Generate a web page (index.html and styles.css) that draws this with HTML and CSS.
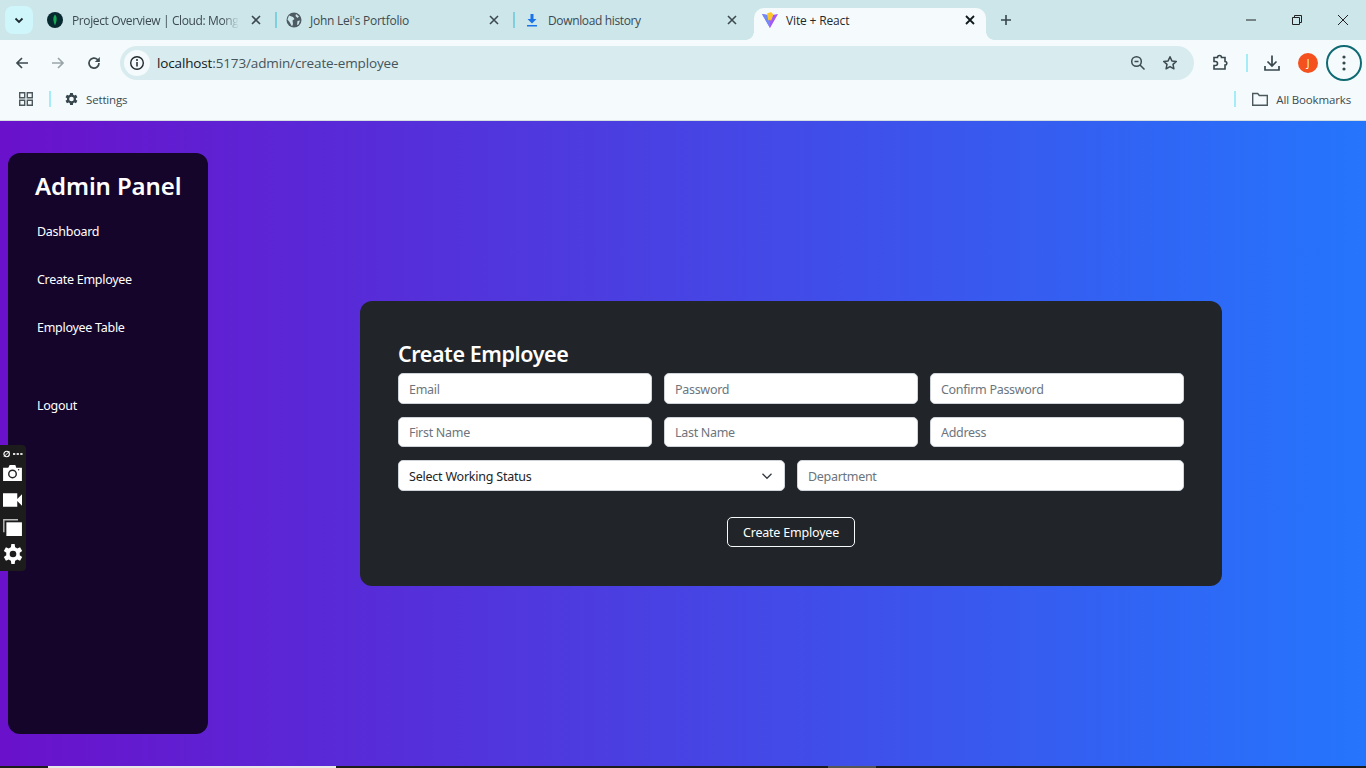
FILE: index.html
```html
<!DOCTYPE html>
<html lang="en">
<head>
<meta charset="utf-8">
<title>Vite + React</title>
<link rel="stylesheet" href="styles.css">
</head>
<body>
<div class="chrome">
  <div class="tabstrip">
    <div class="tabmenu"><svg width="12" height="12" viewBox="0 0 12 12"><path d="M2.5 4.5 6 8l3.5-3.5" fill="none" stroke="#1d2b30" stroke-width="1.8"/></svg></div>
    <div class="tab tab-one">
      <svg class="fav" width="16" height="16" viewBox="0 0 16 16"><circle cx="8" cy="8" r="8" fill="#062a30"/><path d="M8 2.5c2 2.2 2.4 5.6 0 10.8-2.4-5.2-2-8.6 0-10.8z" fill="#13aa52"/></svg>
      <span class="tabtext clipped">Project Overview | Cloud: Mong</span>
      <svg class="tabx" width="10" height="10" viewBox="0 0 10 10"><path d="M1 1l8 8M9 1 1 9" stroke="#3c4a50" stroke-width="1.6"/></svg>
    </div>
    <i class="tabsep"></i>
    <div class="tab tab-two">
      <svg class="fav" width="16" height="16" viewBox="0 0 16 16"><circle cx="8" cy="8" r="7.5" fill="#4f5b62"/><path d="M3 3.5 7 5l1.500 2-2 1.500L7 12l-1 2.500L3.500 10 1.500 7.500zM10 2l3 2.500-1.500 1.500L9.500 4zM11.500 9l2.500-.5-1.500 4-1.500.5z" fill="#cde6ea"/></svg>
      <span class="tabtext">John Lei's Portfolio</span>
      <svg class="tabx" width="10" height="10" viewBox="0 0 10 10"><path d="M1 1l8 8M9 1 1 9" stroke="#3c4a50" stroke-width="1.6"/></svg>
    </div>
    <i class="tabsep"></i>
    <div class="tab tab-three">
      <svg class="fav" width="16" height="16" viewBox="0 0 16 16"><path d="M6.500 2h3v5h3L8 11.500 3.500 7h3zM3 13h10v1.500H3z" fill="#1a73e8"/></svg>
      <span class="tabtext">Download history</span>
      <svg class="tabx" width="10" height="10" viewBox="0 0 10 10"><path d="M1 1l8 8M9 1 1 9" stroke="#3c4a50" stroke-width="1.6"/></svg>
    </div>
    <div class="tab tab-active">
      <svg class="fav" width="16" height="16" viewBox="0 0 16 16"><path d="M0 2l8 1.500L16 2 8 16z" fill="#a259f7"/><path d="M0 2l8 1.500V16z" fill="#6f8cf5"/><path d="M9 0 5 1.500l1.300 7 1.700-1 1 1.500 2.500-6.500z" fill="#ffc62a"/></svg>
      <span class="tabtext">Vite + React</span>
      <svg class="tabx" width="10" height="10" viewBox="0 0 10 10"><path d="M1 1l8 8M9 1 1 9" stroke="#10191c" stroke-width="1.8"/></svg>
    </div>
    <svg class="newtab" width="12" height="12" viewBox="0 0 12 12"><path d="M6 1v10M1 6h10" stroke="#37474d" stroke-width="1.6"/></svg>
    <div class="winbtns">
      <svg width="12" height="12" viewBox="0 0 12 12"><path d="M1 6h10" stroke="#222" stroke-width="1"/></svg>
      <svg width="12" height="12" viewBox="0 0 12 12"><path d="M1.500 3.500h7v7h-7zM3.500 3.500v-2h7v7h-2" fill="none" stroke="#222" stroke-width="1"/></svg>
      <svg width="12" height="12" viewBox="0 0 12 12"><path d="M1 1l10 10M11 1 1 11" stroke="#222" stroke-width="1"/></svg>
    </div>
  </div>
  <div class="toolbar">
    <svg class="navicon nav-back" width="16" height="16" viewBox="0 0 16 16"><path d="M14 8H3M8 3 3 8l5 5" fill="none" stroke="#3d4a50" stroke-width="1.700"/></svg>
    <svg class="navicon nav-forward" width="16" height="16" viewBox="0 0 16 16"><path d="M2 8h11M8 3l5 5-5 5" fill="none" stroke="#9aa5a9" stroke-width="1.700"/></svg>
    <svg class="navicon nav-reload" width="16" height="16" viewBox="0 0 16 16"><path d="M13 8a5 5 0 1 1-1.500-3.500L13 6" fill="none" stroke="#3d4a50" stroke-width="1.700"/><path d="M13.800 2v5h-5z" fill="#3d4a50"/></svg>
    <div class="omnibox">
      <span class="siteinfo"><svg width="16" height="16" viewBox="0 0 16 16"><circle cx="8" cy="8" r="6.300" fill="none" stroke="#20292c" stroke-width="1.400"/><path d="M8 7v4.500" stroke="#20292c" stroke-width="1.500"/><circle cx="8" cy="5" r="1" fill="#20292c"/></svg></span>
      <span class="url"><b>localhost</b>:5173/admin/create-employee</span>
      <svg class="zoomicon" width="16" height="16" viewBox="0 0 16 16"><circle cx="6.500" cy="6.500" r="4.800" fill="none" stroke="#3d4a50" stroke-width="1.500"/><path d="M4.500 6.500h4M10 10l4.500 4.500" stroke="#3d4a50" stroke-width="1.500"/></svg>
      <svg class="staricon" width="16" height="16" viewBox="0 0 16 16"><path d="m8 1.800 1.900 4.100 4.400.5-3.300 3 .9 4.400L8 11.600l-3.900 2.200.9-4.400-3.300-3 4.400-.5z" fill="none" stroke="#3d4a50" stroke-width="1.500" stroke-linejoin="round"/></svg>
    </div>
    <svg class="exticon" width="18" height="18" viewBox="0 0 18 18"><path d="M3 3.500h3.500a2 2 0 0 1 4 0H14v4a1.800 1.800 0 0 1 0 3.600V15H3v-3.500h1.500a2 2 0 0 0 0-4H3z" fill="none" stroke="#37474d" stroke-width="1.600"/></svg>
    <i class="toolsep"></i>
    <svg class="dlicon" width="18" height="18" viewBox="0 0 18 18"><path d="M9 1.500v10M4.500 7.500 9 12l4.500-4.500M2 12v4h14v-4" fill="none" stroke="#37474d" stroke-width="1.700"/></svg>
    <span class="avatar">J</span>
    <span class="menubtn"><svg width="4" height="16" viewBox="0 0 4 16"><circle cx="2" cy="2" r="1.600" fill="#37474d"/><circle cx="2" cy="8" r="1.600" fill="#37474d"/><circle cx="2" cy="14" r="1.600" fill="#37474d"/></svg></span>
  </div>
  <div class="bookmarks">
    <svg class="appsicon" width="16" height="16" viewBox="0 0 16 16"><path d="M1.700 1.700h5v5h-5zM9.300 1.700h5v5h-5zM1.700 9.300h5v5h-5zM9.300 9.300h5v5h-5z" fill="none" stroke="#4b585d" stroke-width="1.400"/></svg>
    <i class="marksep"></i>
    <svg class="gearicon" width="16" height="16" viewBox="0 0 24 24"><path d="M19.400 13a7.500 7.500 0 0 0 0-2l2.200-1.700-2.100-3.600-2.600 1a7.500 7.500 0 0 0-1.700-1L14.800 3h-4.200l-.4 2.700a7.500 7.500 0 0 0-1.700 1l-2.600-1-2.100 3.600L6 11a7.500 7.500 0 0 0 0 2l-2.200 1.700 2.100 3.600 2.600-1a7.500 7.500 0 0 0 1.700 1l.4 2.700h4.200l.4-2.700a7.500 7.500 0 0 0 1.700-1l2.600 1 2.100-3.600zM12.700 15.500a3.500 3.500 0 1 1 0-7 3.500 3.500 0 0 1 0 7z" fill="#37474d"/></svg>
    <span class="marktext">Settings</span>
    <i class="marksep marksep-right"></i>
    <svg class="foldericon" width="18" height="16" viewBox="0 0 18 16"><path d="M1.700 2.500h5l1.600 2h8v9.800H1.700z" fill="none" stroke="#4b585d" stroke-width="1.400"/></svg>
    <span class="marktext">All Bookmarks</span>
  </div>
</div>

<div class="page">
  <aside class="sidebar">
    <h2 class="brand">Admin Panel</h2>
    <nav class="nav">
      <a class="navlink">Dashboard</a>
      <a class="navlink">Create Employee</a>
      <a class="navlink">Employee Table</a>
      <a class="navlink navlink-logout">Logout</a>
    </nav>
  </aside>
  <main class="main">
    <section class="card">
      <h3 class="cardtitle">Create Employee</h3>
      <form class="form">
        <div class="row">
          <input class="field" placeholder="Email">
          <input class="field" placeholder="Password">
          <input class="field" placeholder="Confirm Password">
        </div>
        <div class="row">
          <input class="field" placeholder="First Name">
          <input class="field" placeholder="Last Name">
          <input class="field" placeholder="Address">
        </div>
        <div class="row">
          <div class="field select">Select Working Status
            <svg width="12" height="12" viewBox="0 0 16 16"><path d="M2 5l6 6 6-6" fill="none" stroke="#343a40" stroke-width="1.700"/></svg>
          </div>
          <input class="field" placeholder="Department">
        </div>
        <div class="actions"><button class="submit" type="button">Create Employee</button></div>
      </form>
    </section>
  </main>
</div>

<div class="capture">
  <svg width="20" height="10" viewBox="0 0 22 10"><circle cx="4" cy="5" r="3" fill="none" stroke="#fff" stroke-width="1.300"/><path d="M1 8 7 2" stroke="#fff"/><path d="M11 4h2.500v2H11zM15 4h2.500v2H15zM19 4h2.500v2H19z" fill="#ddd"/></svg>
  <svg width="19" height="16" viewBox="0 0 20 17"><path d="M0 3h5.500L7 0h6l1 3h6v14H0z" fill="#fff"/><circle cx="10" cy="9.500" r="4" fill="none" stroke="#222" stroke-width="1.500"/><circle cx="16.500" cy="5" r=".8" fill="#222"/></svg>
  <svg width="19" height="14" viewBox="0 0 20 14"><path d="M0 0h15v14H0zM15 6 20 1v12l-5-5z" fill="#fff"/></svg>
  <svg width="19" height="17" viewBox="0 0 20 18"><path d="M.8 14V.8h15" fill="none" stroke="#bbb" stroke-width="1.500"/><path d="M3.500 3.500H20V18H3.500z" fill="#fff"/></svg>
  <svg width="20" height="20" viewBox="0 0 24 24"><path d="M20 13.500a8 8 0 0 0 0-3l3-2-2.500-4.500-3.500 1.300a8 8 0 0 0-2.500-1.500L14 0h-4l-.5 3.800A8 8 0 0 0 7 5.300L3.500 4 1 8.500l3 2a8 8 0 0 0 0 3l-3 2L3.500 20 7 18.700a8 8 0 0 0 2.500 1.500L10 24h4l.5-3.800a8 8 0 0 0 2.500-1.500l3.500 1.300 2.500-4.500zM12 16a4 4 0 1 1 0-8 4 4 0 0 1 0 8z" fill="#fff"/></svg>
</div>

<div class="taskbar"><i class="task-white"></i><i class="task-gray"></i></div>
</body>
</html>
```
FILE: styles.css
```css
* { box-sizing: border-box; }
html, body { margin: 0; height: 100%; overflow: hidden; }
body {
  display: flex;
  flex-direction: column;
  height: 768px;
  font-family: "Open Sans", "Noto Sans", sans-serif;
  position: relative;
}
svg { display: block; flex: none; }

/* Browser chrome */
.chrome { flex: none; height: 121px; background: #f5fbfc; border-bottom: 1px solid #d5dfe2; font-family: "Open Sans", sans-serif; letter-spacing: -.15px; }
.tabstrip { height: 40px; background: #cde6ea; display: flex; align-items: flex-end; position: relative; }
.tabmenu { flex: none; width: 28px; height: 28px; margin-left: 5px; align-self: center; display: flex; align-items: center; justify-content: center; background: #cff6fb; border-radius: 8px; }
.tab { flex: none; height: 32px; padding-bottom: 8px; display: flex; align-items: center; font-size: 12px; color: #3c4a50; letter-spacing: -.25px; }
.tabtext { flex: 1; white-space: nowrap; margin-left: 8px; }
.clipped { -webkit-mask-image: linear-gradient(90deg, #000 90%, transparent); mask-image: linear-gradient(90deg, #000 90%, transparent); flex: none; width: 167px; margin-left: 9px; margin-right: 12px; letter-spacing: -.38px; }
.tabx { margin-right: 14px; }
.tab-one { width: 239px; margin-left: 3px; padding-left: 11px; }
.tab-two { width: 236px; padding-left: 9px; }
.tab-three { width: 239px; padding-left: 9px; letter-spacing: -.36px; }
.tab-three .tabx { margin-right: 17px; }
.tab-active { width: 232px; background: #f5fbfc; border-radius: 10px 10px 0 0; color: #1f2a2e; padding-left: 8px; letter-spacing: -.15px; position: relative; }
.tab-active::before, .tab-active::after { content: ""; position: absolute; bottom: 0; width: 8px; height: 8px; }
.tab-active::before { left: -8px; background: radial-gradient(circle at 0 0, #cde6ea 7.500px, #f5fbfc 8px); }
.tab-active::after { right: -8px; background: radial-gradient(circle at 100% 0, #cde6ea 7.500px, #f5fbfc 8px); }
.tab-active .tabx { margin-right: 11px; }
.tabsep { width: 2px; height: 16px; background: #7fcfdc; margin-bottom: 12px; flex: none; }
.newtab { margin: 0 0 14px 14px; }
.winbtns { margin-left: auto; display: flex; gap: 34px; padding-right: 17px; align-self: center; }
.toolbar { height: 41px; display: flex; align-items: center; padding-top: 5px; }
.nav-back { margin-left: 14px; }
.nav-forward { margin-left: 20px; }
.nav-reload { margin-left: 20px; }
.omnibox { width: 1074px; height: 34px; margin-left: 18px; border-radius: 17px; background: #d8ebee; display: flex; align-items: center; padding-left: 4px; }
.siteinfo { width: 26px; height: 26px; border-radius: 50%; background: #f5fbfc; display: flex; align-items: center; justify-content: center; }
.url { margin-left: 7px; font-size: 13.500px; color: #45555b; flex: 1; letter-spacing: -.14px; }
.url b { font-weight: 400; color: #12191c; }
.zoomicon { margin-right: 16px; }
.staricon { margin-right: 16px; }
.exticon { margin-left: 17px; }
.toolsep { width: 2px; height: 18px; background: #a4ecf6; margin-left: 17px; }
.dlicon { margin-left: 15px; }
.avatar { width: 20px; height: 20px; margin-left: 17px; border-radius: 50%; background: #f4511e; color: #fff; font-size: 10px; display: flex; align-items: center; justify-content: center; }
.menubtn { width: 36px; height: 36px; margin-left: 8px; border: 2px solid #0f6a73; border-radius: 50%; display: flex; align-items: center; justify-content: center; }
.bookmarks { height: 39px; display: flex; align-items: center; padding-left: 18px; padding-bottom: 3px; }
.marktext { font-size: 11.500px; color: #3c4a50; margin-left: 7px; }
.marksep { width: 2px; height: 16px; background: #a4ecf6; margin-left: 15px; }
.gearicon { margin-left: 12px; }
.marksep-right { margin-left: auto; }
.foldericon { margin-left: 15px; }
.bookmarks .marktext:last-child { margin-left: 7px; margin-right: 15px; }

/* Page */
.page { flex: 1; display: flex; min-height: 0; background: linear-gradient(90deg, #6a11cb, #2575fc); color: #fff; }
.sidebar { flex: none; width: 200px; margin: 32px 8px; background: #15052b; border-radius: 12px; padding: 16px 0 0 29px; font-family: "Noto Sans", sans-serif; }
.brand { margin: 0 0 0 -2px; font-size: 24px; font-weight: 600; line-height: 34px; letter-spacing: -.1px; white-space: nowrap; }
.nav { display: flex; flex-direction: column; margin-top: 19px; }
.navlink { font-size: 12.500px; line-height: 20px; height: 48px; letter-spacing: -.28px; }
.navlink-logout { margin-top: 30px; }
.main { flex: 1; display: flex; align-items: center; justify-content: center; }
.card { width: 862px; height: 285px; background: #212529; border-radius: 12px; padding: 36px 38px 38px; font-family: "Noto Sans", sans-serif; }
.cardtitle { margin: 0; font-size: 21.500px; line-height: 33px; height: 36px; font-weight: 600; letter-spacing: -.42px; }
.form { display: flex; flex-direction: column; gap: 13px; }
.row { display: flex; gap: 12px; }
.field { flex: 1 1 0; min-width: 0; height: 30.500px; padding: 2px 10px 0; border: 1px solid #ced4da; border-radius: 5px; background: #fff; font: 12.500px "Noto Sans", sans-serif; letter-spacing: -.3px; color: #212529; }
.field::placeholder { color: #6c757d; opacity: 1; }
.select { display: flex; align-items: center; justify-content: space-between; letter-spacing: -.22px; }
.select svg { margin-right: 1px; }
.actions { display: flex; justify-content: center; margin-top: 13px; }
.submit { width: 128px; height: 30px; padding: 2px 0 0; background: transparent; border: 1px solid #f8f9fa; border-radius: 5px; color: #fff; font: 12.500px "Noto Sans", sans-serif; letter-spacing: -.2px; }

/* Overlays */
.capture { position: absolute; left: 0; top: 445px; width: 26px; height: 126px; background: #1c1c1c; border-radius: 0 4px 4px 0; display: grid; grid-template-rows: 11.500px repeat(4, 27px); justify-items: center; align-items: center; padding: 3px 1px 0 0; }
.taskbar { flex: none; height: 2px; background: #1c1c1c; display: flex; }
.task-white { width: 288px; margin-left: 48px; background: #e8e8e8; }
.task-gray { width: 48px; margin-left: 492px; background: #555; }
```
